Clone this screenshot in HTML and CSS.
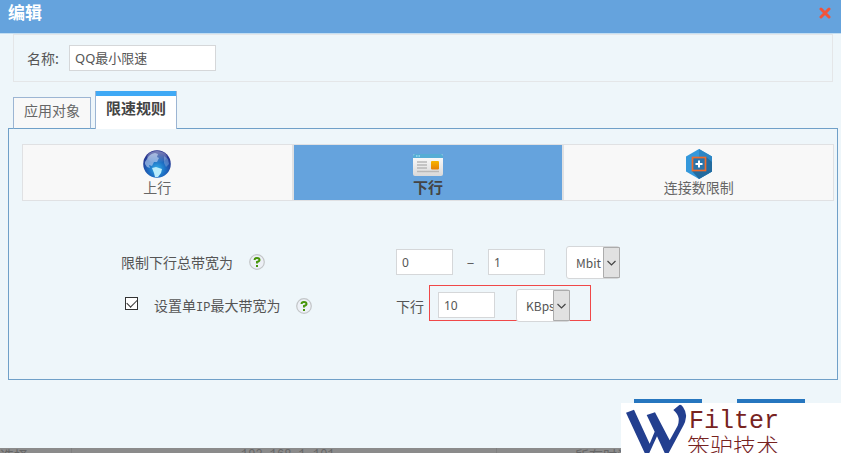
FILE: index.html
```html
<!DOCTYPE html>
<html lang="zh-CN">
<head>
<meta charset="utf-8">
<title>编辑</title>
<link rel="stylesheet" href="styles.css">
</head>
<body>
<main class="dialog">
  <header class="title-bar">
    <h1>编辑</h1>
    <button class="close" type="button" aria-label="关闭">
      <svg width="12" height="12" viewBox="0 0 12 12"><path d="M2 2l8 8M10 2l-8 8" stroke="#f0533a" stroke-width="3" stroke-linecap="round"/></svg>
    </button>
  </header>

  <section class="name-box">
    <label for="name">名称:</label>
    <input class="field name-field" id="name" type="text" value="QQ最小限速">
  </section>

  <nav class="tabs">
    <button class="tab" type="button">应用对象</button>
    <button class="tab tab-active" type="button">限速规则</button>
  </nav>

  <section class="panel">
    <div class="modes">
      <button class="mode" type="button">
        <svg width="30" height="30" viewBox="0 0 30 30">
          <defs>
            <radialGradient id="sea" cx="50%" cy="68%" r="60%"><stop offset="0" stop-color="#35b0e8"/><stop offset=".5" stop-color="#1d6fc4"/><stop offset="1" stop-color="#26318c"/></radialGradient>
            <linearGradient id="shine" x1="0" y1="0" x2="0" y2="1"><stop offset="0" stop-color="#fff" stop-opacity=".4"/><stop offset="1" stop-color="#fff" stop-opacity="0"/></linearGradient>
          </defs>
          <circle cx="15" cy="15" r="13.8" fill="url(#sea)"/>
          <path d="M5 10Q7 5 13 4l3 1-1 3 2 1-2 4-3 0-2 4-3-1 1 3-3-1-2-3 0-2z" fill="#a9c3ea" opacity=".7"/>
          <path d="M10 19l4-1 6 2-1 4-3 4-3 0-1-4z" fill="#b9ecfb"/>
          <path d="M22 7l4 3 1 5-3 3-2-4z" fill="#80a7dd" opacity=".5"/>
          <ellipse cx="15" cy="8" rx="10" ry="6" fill="url(#shine)"/>
        </svg>
        <span>上行</span>
      </button>
      <button class="mode mode-active" type="button">
        <svg width="30" height="30" viewBox="0 0 30 30">
          <defs>
            <linearGradient id="card" x1="0" y1="0" x2="0" y2="1"><stop offset="0" stop-color="#fff"/><stop offset="1" stop-color="#d9d9d9"/></linearGradient>
            <linearGradient id="gold" x1="0" y1="0" x2="0" y2="1"><stop offset="0" stop-color="#f8b600"/><stop offset="1" stop-color="#e57f05"/></linearGradient>
          </defs>
          <rect y="5" width="30" height="22" rx="2" fill="url(#card)"/>
          <path d="M0 9V7q0-2 2-2h26q2 0 2 2v2z" fill="#55add5"/>
          <path d="M3 7h1.500M5.500 7h1.500" stroke="#8ad0e8" stroke-width="2"/>
          <path d="M4 13h10M4 16h10M4 19h10M4 22.500h22" stroke="#b8b8b8" stroke-width="1.300"/>
          <rect x="18" y="12" width="8" height="8.500" rx="1" fill="url(#gold)"/>
        </svg>
        <span>下行</span>
      </button>
      <button class="mode" type="button">
        <svg width="30" height="30" viewBox="0 0 30 30">
          <path d="M15 0l13 7.500v15L15 30 2 22.500v-15z" fill="#3498db"/>
          <path d="M15 0l13 7.500v15L15 30z" fill="#2d86c4"/>
          <path d="M22 8l6 5v9.500L15 30l-7-8z" fill="#236b9f"/>
          <rect x="8.500" y="8.500" width="13" height="13" fill="#2a74ab" stroke="#ef6b2b" stroke-width="1.700"/>
          <path d="M15 11.500v7M11.500 15h7" stroke="#fff" stroke-width="2"/>
        </svg>
        <span>连接数限制</span>
      </button>
    </div>

    <div class="rule">
      <div class="caption">
        <label for="min">限制下行总带宽为</label>
        <svg class="help" width="16" height="16" viewBox="0 0 16 16"><circle cx="8" cy="8" r="7.300" fill="#edf0f6" stroke="#c3c6c8" stroke-width="1.200"/><path d="M5.500 6Q5.500 4 8 4t2.500 2Q10.500 7.300 8 8v1.500M8 11v2" fill="none" stroke="#479509" stroke-width="2"/></svg>
      </div>
      <input class="field number" id="min" type="text" value="0">
      <span class="dash">–</span>
      <input class="field number" type="text" value="1" aria-label="最大值">
      <span class="unit">
        <select aria-label="单位"><option>Mbit</option></select>
        <svg class="arrow" width="17" height="31" viewBox="0 0 17 31"><path d="M.5.500h16v30H.5z" fill="#e1e1e1" stroke="#acacac"/><path d="M4.500 14l4 4 4-4" fill="none" stroke="#444" stroke-width="1.200"/></svg>
      </span>
    </div>

    <div class="rule">
      <div class="caption caption-check">
        <input class="check" id="per-ip" type="checkbox" checked>
        <label for="per-ip">设置单<span class="latin">IP</span>最大带宽为</label>
        <svg class="help" width="16" height="16" viewBox="0 0 16 16"><circle cx="8" cy="8" r="7.300" fill="#edf0f6" stroke="#c3c6c8" stroke-width="1.200"/><path d="M5.500 6Q5.500 4 8 4t2.500 2Q10.500 7.300 8 8v1.500M8 11v2" fill="none" stroke="#479509" stroke-width="2"/></svg>
      </div>
      <label for="down">下行</label>
      <div class="marked">
        <input class="field number" id="down" type="text" value="10">
        <span class="unit">
          <select aria-label="单位"><option>KBps</option></select>
          <svg class="arrow" width="17" height="31" viewBox="0 0 17 31"><path d="M.5.500h16v30H.5z" fill="#e1e1e1" stroke="#acacac"/><path d="M4.500 14l4 4 4-4" fill="none" stroke="#444" stroke-width="1.200"/></svg>
        </span>
      </div>
    </div>
  </section>

  <footer class="actions">
    <button type="button" aria-label="确定"></button>
    <button type="button" aria-label="取消"></button>
  </footer>
</main>

<div class="backdrop">
  <span>选择</span>
  <span>192.168.1.101</span>
  <span>所有时间</span>
</div>

<aside class="brand">
  <svg width="68" height="50" viewBox="0 0 204 150"><path d="M15 29L39 20 86 122 101 86 77 36 102 28 146 112 170 68Q174 58 173 46 171 33 157 21L175 6Q180 4 186 12 197 28 195 42 193 58 188 66L142 152H132L108 100 84 152H72z" fill="#233f8f"/></svg>
  <div class="brand-text">
    <span class="brand-name">Filter</span>
    <span class="brand-sub">笨驴技术</span>
  </div>
</aside>
</body>
</html>
```
FILE: styles.css
```css
* {
  box-sizing: border-box;
}

body {
  margin: 0;
  height: 100vh;
  display: flex;
  flex-direction: column;
  position: relative;
  overflow: hidden;
  background: #8b8b8b;
  color: #555;
  font: 14px/20px "Noto Sans CJK SC", sans-serif;
}

button,
input,
select {
  font: inherit;
  color: inherit;
  margin: 0;
}

svg {
  display: block;
  flex: none;
}

.dialog {
  flex: 1;
  min-height: 0;
  overflow: hidden;
  background: #eef6fa;
}

.title-bar {
  height: 34px;
  padding: 0 10px 0 8px;
  display: flex;
  justify-content: space-between;
  align-items: flex-start;
  background: #65a3dd;
  border-bottom: 1px solid #c3def2;
}

h1 {
  margin: 0;
  color: #fff;
  font-size: 17px;
  line-height: 24px;
}

.close {
  margin-top: 7px;
  padding: 0;
  border: 0;
  background: none;
}

.name-box {
  height: 48px;
  margin: 0 8px 0 13px;
  padding: 0 13px;
  display: flex;
  align-items: center;
  gap: 8px;
  border: 1px solid #e4e6e8;
}

.name-box label {
  width: 34px;
  white-space: nowrap;
}

.field {
  height: 26px;
  padding: 0 5px;
  border: 1px solid #d5d7d9;
  background: #fff;
  font: 12px/24px "Noto Sans", "Noto Sans CJK SC", sans-serif;
}

.name-field {
  width: 147px;
  padding-bottom: 2px;
  font-size: 13px;
}

.tabs {
  display: flex;
  align-items: flex-end;
  gap: 4px;
  margin: 9px 0 -1px 13px;
}

.tab {
  height: 32px;
  padding: 0 10px 6px;
  border: 1px solid #9cb5d3;
  border-bottom-color: #70a0c8;
  background: #f8f8f8;
  color: #666;
}

.tab-active {
  position: relative;
  height: 38px;
  padding-bottom: 4px;
  border-top: 0;
  border-bottom: 0;
  box-shadow: inset 0 5px #3fa9f5;
  background: #fff;
  color: #444;
  font-size: 15px;
  font-weight: bold;
}

.panel {
  height: 252px;
  margin: 0 3px 0 8px;
  padding: 15px 3px 0 13px;
  border: 1px solid #70a0c8;
}

.modes {
  display: flex;
  margin-bottom: 39px;
}

.mode {
  flex: 1;
  height: 57px;
  padding: 4px 0 0;
  display: flex;
  flex-direction: column;
  align-items: center;
  border: 1px solid #e0e1e3;
  background: #f8f8f8;
  color: #666;
}

.mode span {
  line-height: 16px;
}

.mode-active {
  background: #65a3dd;
  color: #444;
  font-size: 15px;
  font-weight: bold;
}

.rule {
  height: 44px;
  display: flex;
  align-items: center;
}

.caption {
  width: 275px;
  display: flex;
  align-items: center;
  gap: 16px;
}

.rule > .caption {
  margin-left: 99px;
}

.rule > .caption-check {
  width: 271px;
  margin-left: 103px;
}

.rule > .caption,
.rule > label {
  flex: none;
}

.latin {
  font: 12px/20px "Liberation Mono", monospace;
}

.check {
  appearance: none;
  width: 13px;
  height: 13px;
  margin-bottom: 6px;
  border: 1px solid #333;
  background: #fff;
  display: grid;
  place-items: center;
}

.check::before {
  content: "";
  width: 9px;
  height: 5px;
  margin-bottom: 3px;
  border: solid #333;
  border-width: 0 0 1px 1px;
  transform: rotate(-45deg);
}

.number {
  width: 57px;
}

.dash {
  width: 35px;
  padding-bottom: 3px;
  text-align: center;
}

.unit {
  position: relative;
  width: 54px;
  height: 33px;
  margin-left: 21px;
}

.unit select {
  appearance: none;
  width: 100%;
  height: 100%;
  padding: 0 0 0 9px;
  border: 1px solid #d5d7d9;
  border-radius: 3px;
  background: #fff;
  font: 12px/31px "Noto Sans CJK SC", sans-serif;
}

.arrow {
  position: absolute;
  top: 1px;
  right: 0;
  pointer-events: none;
}

.marked {
  width: 162px;
  height: 36px;
  margin: 0 0 6px 5px;
  padding: 4px 0 0 8px;
  display: flex;
  align-items: center;
  border: 1px solid #f04848;
}

.actions {
  display: flex;
  justify-content: flex-end;
  gap: 35px;
  margin: 19px 36px 0 0;
}

.actions button {
  width: 68px;
  height: 30px;
  border: 0;
  background: #2676bf;
}

.backdrop {
  height: 5px;
  display: grid;
  grid-template-columns: 72px 425px 1fr;
  align-items: end;
  overflow: hidden;
  color: #666;
}

.backdrop span {
  line-height: 14px;
  border-right: 1px solid #808080;
}

.backdrop span:nth-child(2) {
  padding-left: 169px;
  font-family: "Liberation Mono", monospace;
  font-size: 12px;
}

.backdrop span:nth-child(3) {
  padding-left: 78px;
}

.brand {
  position: absolute;
  right: 0;
  bottom: 0;
  width: 220px;
  height: 50px;
  display: flex;
  overflow: hidden;
  background: #fff;
  color: #77231f;
}

.brand-text {
  display: flex;
  flex-direction: column;
}

.brand-name {
  font: 25px/38px "Liberation Mono", monospace;
}

.brand-sub {
  margin-left: -2px;
  font: 300 23px/8px "Noto Sans CJK SC", sans-serif;
}
```
